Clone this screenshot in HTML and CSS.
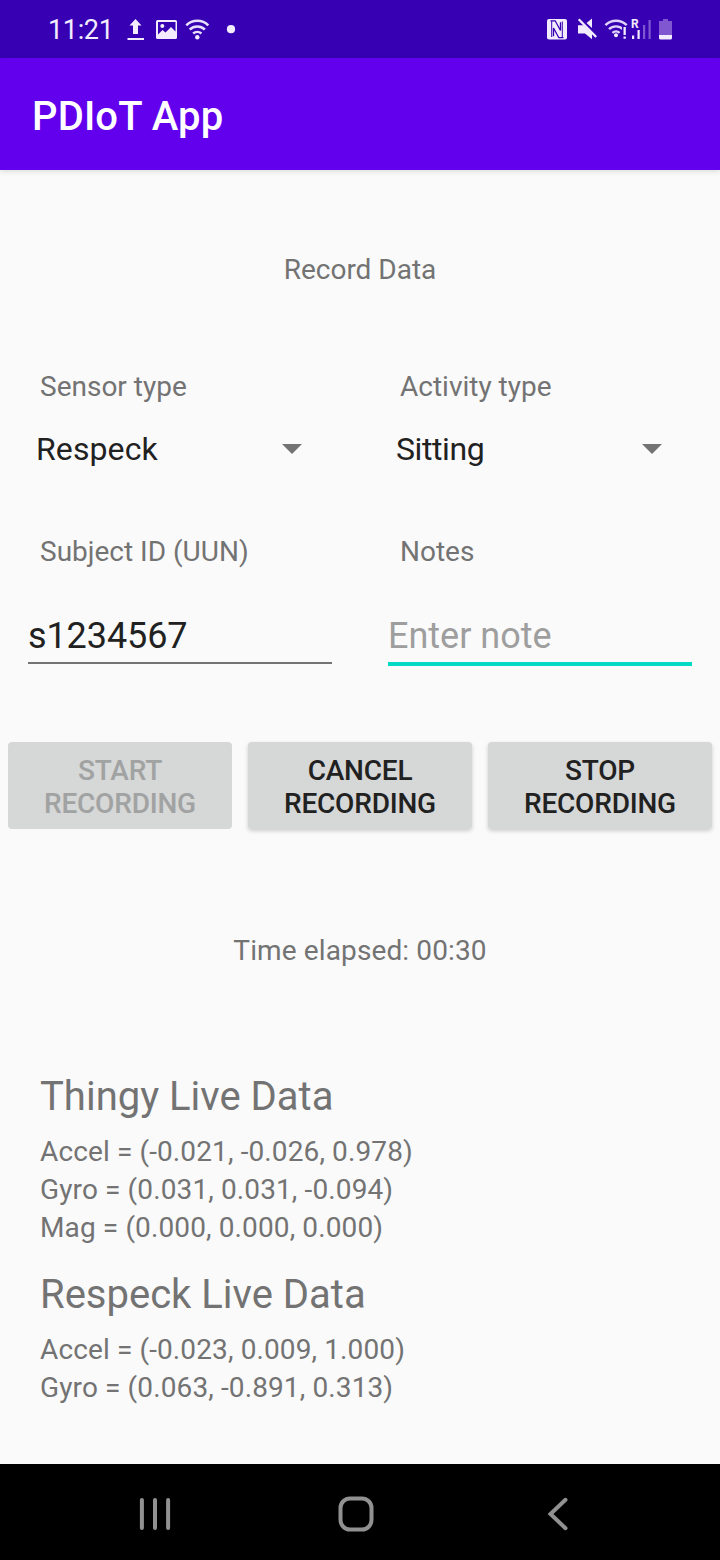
FILE: index.html
```html
<!DOCTYPE html>
<html lang="en">
<head>
<meta charset="utf-8">
<title>PDIoT App</title>
<link rel="stylesheet" href="styles.css">
</head>
<body>
<div class="screen">
  <div class="status-bar">
    <span class="clock">11:21</span>
    <svg class="status-left" width="112" height="24" viewBox="126 17 112 24" fill="#f3ecff">
      <path d="M135.500 19l6 6.500h-3.500V34h-5v-8.500h-3.500zM127.500 38h16.500v2h-16.500z"/>
      <path fill-rule="evenodd" d="M157.500 20h18q1.500 0 1.500 1.500v16q0 1.500-1.500 1.500h-18q-1.500 0-1.500-1.500v-16q0-1.500 1.500-1.500zM158 22v12.500l4.500-4.500 3 2.500 5.500-5.500 4.500 4.500V22z"/>
      <circle cx="162.300" cy="26" r="2"/>
      <g fill="none" stroke="#e9defc" stroke-width="2.600">
        <path d="M186.300 25.300a15.500 15.500 0 0 1 22 0"/>
        <path d="M189.700 29.500a11 11 0 0 1 15.200 0"/>
        <path d="M193.200 33.500a6.200 6.200 0 0 1 8.200 0"/>
      </g>
      <circle cx="197.300" cy="37.300" r="2.200"/>
      <circle cx="231" cy="29.200" r="4.100"/>
    </svg>
    <svg class="status-right" width="128" height="24" viewBox="546 17 128 24" fill="#f3ecff">
      <rect x="547" y="19" width="20" height="20.500" rx="2"/>
      <path d="M550.500 20.800h4.700l5.300 9.700v-8.300" fill="none" stroke="#3700b3" stroke-width="1.300"/>
      <path d="M563.500 37.700h-4.700l-5.300-9.700v8.300" fill="none" stroke="#3700b3" stroke-width="1.300"/>
      <path d="M551.700 21v16M562.300 21.500v16" fill="none" stroke="#3700b3" stroke-width="1"/>
      <path d="M578 25.200h5.500l8.500 8.300v5.700l-7-5.700h-7zM586.500 23l5.500-4.500v9.500z"/>
      <path d="M578.700 19.200l17.500 17.800" stroke="#f3ecff" stroke-width="2.300"/>
      <path d="M580.500 18.200l17 17.300" stroke="#3700b3" stroke-width="1"/>
      <g fill="none" stroke="#e0d2fa" stroke-width="2.400">
        <path d="M605.400 25.200a15 15 0 0 1 21.300 0"/>
        <path d="M609 29.200a10 10 0 0 1 14 0"/>
        <path d="M612.400 32.900a5.400 5.400 0 0 1 7.200 0"/>
      </g>
      <circle cx="616" cy="35.200" r="2"/>
      <path d="M622 26.500h5.400v14h-5.400z" fill="#3700b3"/>
      <path d="M623.500 27h2.300v8h-2.300zM623.500 36.500h2.300v2.300h-2.300z"/>
      <text class="roaming" x="631" y="27.600">R</text>
      <path d="M632 35.500h2.200v3.500h-2.200zM637.500 30h2.200v9h-2.200z"/>
      <path d="M643 25h2.200v14h-2.200zM648.500 20h2.200v19h-2.200z" fill="#7f57d0"/>
      <path d="M663 19h5v2h4v14h-13V21h4z" fill="#8057d0"/>
      <path d="M659 35h13v3q0 1.500-1.500 1.500h-10q-1.500 0-1.500-1.500z"/>
    </svg>
  </div>
  <header class="app-bar">PDIoT App</header>
  <main class="content">
    <h1 class="label page-title">Record Data</h1>
    <div class="form-row">
      <div class="field">
        <div class="label field-label">Sensor type</div>
        <div class="spinner"><span>Respeck</span><i class="arrow"></i></div>
      </div>
      <div class="field">
        <div class="label field-label">Activity type</div>
        <div class="spinner"><span class="narrow">Sitting</span><i class="arrow"></i></div>
      </div>
    </div>
    <div class="form-row text-fields">
      <div class="field">
        <div class="label field-label">Subject ID (UUN)</div>
        <div class="text-input">s1234567</div>
      </div>
      <div class="field">
        <div class="label field-label">Notes</div>
        <div class="text-input focused">Enter note</div>
      </div>
    </div>
    <div class="buttons">
      <button class="btn" disabled>START<br>RECORDING</button>
      <button class="btn">CANCEL<br>RECORDING</button>
      <button class="btn">STOP<br>RECORDING</button>
    </div>
    <div class="label elapsed">Time elapsed: 00:30</div>
    <section class="live">
      <h2 class="live-title">Thingy Live Data</h2>
      <div class="label">Accel = (-0.021, -0.026, 0.978)</div>
      <div class="label">Gyro = (0.031, 0.031, -0.094)</div>
      <div class="label">Mag = (0.000, 0.000, 0.000)</div>
    </section>
    <section class="live">
      <h2 class="live-title">Respeck Live Data</h2>
      <div class="label">Accel = (-0.023, 0.009, 1.000)</div>
      <div class="label">Gyro = (0.063, -0.891, 0.313)</div>
    </section>
  </main>
  <nav class="nav-bar">
    <svg width="34" height="34" viewBox="0 0 34 34" fill="none" stroke="#919191" stroke-width="4" stroke-linecap="round"><path d="M3.900 2.900v28.200M17 2.900v28.200M30.100 2.900v28.200"/></svg>
    <svg width="36" height="36" viewBox="0 0 36 36" fill="none" stroke="#919191" stroke-width="4"><rect x="2.500" y="2.500" width="31" height="31" rx="9.500"/></svg>
    <svg width="22" height="34" viewBox="0 0 22 34" fill="none" stroke="#919191" stroke-width="4" stroke-linecap="round"><path d="M18.500 2.800L3.500 17l15 14.200"/></svg>
  </nav>
</div>
</body>
</html>
```
FILE: styles.css
```css
* { box-sizing: border-box; }
body { margin: 0; background: #fafafa; font-family: Roboto, sans-serif; }
.screen { width: 720px; height: 1560px; display: flex; flex-direction: column; }

.status-bar { height: 58px; background: #3700b3; display: flex; align-items: flex-start; padding: 17px 46px 0 48px; }
.clock { width: 78px; font-size: 27px; line-height: 26px; letter-spacing: -.35px; color: #f3ecff; }
.status-right { margin-left: auto; }
.roaming { font: 700 12px Roboto, sans-serif; }

.app-bar { height: 112px; background: #6200ee; color: #fff; font-size: 40px; font-weight: 500; line-height: 48px; letter-spacing: .12px; padding: 35px 32px 0; box-shadow: 0 1px 6px rgba(0, 0, 0, .14); }

.content { flex: 1; padding-top: 81px; }
.label { margin: 0; font-size: 28px; font-weight: 400; line-height: 38px; letter-spacing: .12px; color: #737373; }
.page-title, .elapsed { text-align: center; }
.label.page-title, .label.field-label { letter-spacing: 0; }
.form-row { display: grid; grid-template-columns: 1fr 1fr; margin-top: 79px; }
.text-fields { margin-top: 65px; }
.field-label { padding-left: 40px; }
.spinner { display: flex; align-items: center; justify-content: space-between; margin-top: 24px; padding: 0 58px 0 36px; height: 38px; font-size: 32px; line-height: 38px; letter-spacing: .1px; color: #212121; }
.narrow { letter-spacing: -.4px; }
.arrow { border: 10px solid transparent; border-top-color: #737373; border-bottom: 0; }
.text-input { margin: 44px 28px 0; height: 49px; border-bottom: 2px solid #737373; font-size: 36px; line-height: 42px; letter-spacing: -.1px; color: #212121; }
.text-input.focused { height: 51px; border-bottom: 4px solid #03dac5; letter-spacing: 0; color: #9e9e9e; }

.buttons { display: grid; grid-template-columns: repeat(3, 224px); gap: 16px; padding-left: 8px; margin-top: 76px; }
.btn { height: 87px; padding: 12px 0 9px; border: 0; border-radius: 4px; background: #d6d7d7; color: #212121; font: 500 28px/33px Roboto, sans-serif; letter-spacing: -.2px; box-shadow: 0 2px 4px rgba(0, 0, 0, .18); }
.btn:disabled { color: #a1a2a2; box-shadow: none; }

.elapsed { margin-top: 103px; }
.live { padding-left: 40px; margin-top: 25px; }
.elapsed + .live { margin-top: 104px; }
.live-title { margin: 0 0 13px; font-size: 40px; line-height: 46px; font-weight: 400; color: #737373; }

.nav-bar { height: 96px; background: #000; display: grid; grid-template-columns: 34px 36px 22px; column-gap: 166px; align-items: center; padding: 4px 0 0 138px; }
.nav-bar svg:last-child { margin-left: 7px; }
```
